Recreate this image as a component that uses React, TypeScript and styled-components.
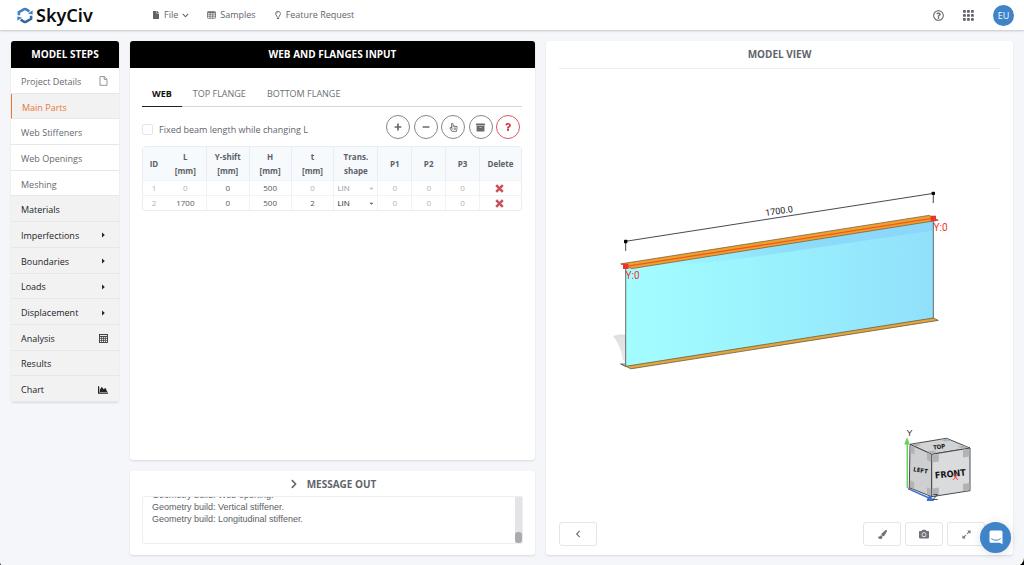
import React from "react";
import styled, { createGlobalStyle, css } from "styled-components";
import {
  FaArchive,
  FaCamera,
  FaChartArea,
  FaChevronDown,
  FaChevronLeft,
  FaChevronRight,
  FaFile,
  FaPaintBrush,
  FaQuestion,
  FaRegHandPointer,
  FaRegLightbulb,
  FaRegQuestionCircle,
} from "react-icons/fa";

const GlobalStyle = createGlobalStyle`
  * { box-sizing: border-box; }
  html { background: #000; }
  body { margin: 0; font-family: "Open Sans", "Noto Sans", sans-serif; font-size: 9px; color: #5f646b; }
  button, select, input { font: inherit; color: inherit; margin: 0; padding: 0; background: none; border: 0; }
  button { cursor: pointer; }
  a { color: inherit; text-decoration: none; }
`;

const Page = styled.div`
  min-height: 100vh;
  display: flex;
  flex-direction: column;
  background: #f5f6f9;
  border-radius: 0 0 8px 4px;
  overflow: hidden;
`;

const Header = styled.header`
  display: flex;
  align-items: center;
  height: 30px;
  padding: 0 10px 0 17px;
  background: #fff;
  box-shadow: 0 1px 2px rgba(0, 0, 0, 0.2);
`;

const Brand = styled.a`
  display: flex;
  align-items: center;
  gap: 3px;
  width: 135px;
  font: 600 18px/28px "Noto Sans", "Open Sans", sans-serif;
  color: #0c0c0e;
`;

const TopNav = styled.nav`
  display: flex;
  flex: 1;
  gap: 18px;
`;

const NavButton = styled.button`
  display: flex;
  align-items: center;
  gap: 4px;
  line-height: 14px;
`;

const HeaderTools = styled.div`
  display: flex;
  align-items: center;
  gap: 19px;
`;

const IconButton = styled.button`
  display: flex;
`;

const Avatar = styled.button`
  width: 21px;
  height: 21px;
  border-radius: 50%;
  background: #3f83c8;
  color: #fff;
`;

const Main = styled.main`
  flex: 1;
  display: grid;
  grid-template-columns: 108px minmax(0, 405fr) minmax(0, 467fr);
  gap: 11px;
  padding: 11px;
`;

const panel = css`
  background: #fff;
  border-radius: 3px;
  box-shadow: 0 1px 2px rgba(40, 50, 70, 0.14);
`;

const Sidebar = styled.nav`
  ${panel}
  align-self: start;
  overflow: hidden;
`;

const Title = styled.h2<{ $dark?: boolean }>`
  margin: 0;
  display: flex;
  align-items: center;
  justify-content: center;
  gap: 8px;
  height: 27px;
  padding-bottom: 2px;
  font-size: 10px;
  font-weight: 700;
  color: ${(p) => (p.$dark ? "#fff" : "#5f646b")};
  background: ${(p) => (p.$dark ? "#000" : "transparent")};
`;

const StepList = styled.ul`
  list-style: none;
  margin: 0;
  padding: 0;
  display: grid;
  grid-auto-rows: 1fr;
  height: 334px;
`;

const Step = styled.li<{ $group?: boolean; $active?: boolean }>`
  display: grid;
  border-bottom: 1px solid #e6e7e9;
  background: ${(p) => (p.$group || p.$active ? "#f2f2f3" : "#fff")};
  color: ${(p) => (p.$active ? "#e8773a" : p.$group ? "#222427" : "#666a70")};
  ${(p) => p.$active && "border-left: 1px solid #e8773a;"}
`;

const StepLink = styled.a`
  display: flex;
  align-items: center;
  justify-content: space-between;
  padding: 2px 10px 0;
`;

const StepIcon = styled.span`
  width: 12px;
  display: flex;
  justify-content: center;
`;

const Column = styled.div`
  display: flex;
  flex-direction: column;
  gap: 11px;
`;

const InputPanel = styled.section`
  ${panel}
  flex: 1;
  overflow: hidden;
`;

const PanelBody = styled.div`
  padding: 12px 13px 12px 12px;
`;

const Tabs = styled.div`
  display: flex;
  gap: 1px;
  height: 27px;
  border-bottom: 1px solid #d4d6d9;
`;

const Tab = styled.button<{ $active?: boolean }>`
  height: 27px;
  padding: 0 10px;
  font-weight: ${(p) => (p.$active ? 700 : 400)};
  color: ${(p) => (p.$active ? "#111" : "#6b6f75")};
  border-bottom: 1px solid ${(p) => (p.$active ? "#222" : "transparent")};
`;

const Toolbar = styled.div`
  display: flex;
  align-items: center;
  justify-content: space-between;
  padding: 8px 2px 7px 0;
`;

const CheckLabel = styled.label`
  display: flex;
  align-items: center;
  gap: 6px;
  padding-top: 4px;
`;

const CheckBox = styled.input`
  appearance: none;
  width: 11px;
  height: 11px;
  border: 1px solid #e3e5e9;
  border-radius: 2px;
`;

const RoundButtons = styled.div`
  display: flex;
  justify-content: space-between;
  width: 134px;
`;

const RoundButton = styled.button<{ $danger?: boolean }>`
  width: 24px;
  height: 24px;
  display: flex;
  align-items: center;
  justify-content: center;
  border: 1px solid ${(p) => (p.$danger ? "#d65a62" : "#86888c")};
  border-radius: 50%;
  color: ${(p) => (p.$danger ? "#cf3742" : "#66696e")};
`;

const Sheet = styled.table`
  width: 100%;
  table-layout: fixed;
  border-collapse: separate;
  border-spacing: 0;
  border: 1px solid #e9edf1;
  border-radius: 3px;
  text-align: center;
  font-size: 8px;
`;

const HeadCell = styled.th`
  height: 33px;
  padding: 0;
  line-height: 14px;
  font-weight: 700;
  color: #5b6067;
  background: #f7fafc;
  border-right: 1px solid #e9edf1;
  &:first-child, &:last-child { border-right: 0; }
`;

const Cell = styled.td<{ $muted?: boolean }>`
  height: 15px;
  padding: 0;
  line-height: 14px;
  color: ${(p) => (p.$muted ? "#b0b3b8" : "#54585e")};
  border-top: 1px solid #f0f3f5;
  border-right: 1px solid #f0f3f5;
  &:first-child, &:last-child { border-right: 0; }
`;

const ShapePick = styled.span<{ $muted?: boolean }>`
  display: flex;
  align-items: center;
  justify-content: space-between;
  padding: 0 3px;
  color: ${(p) => (p.$muted ? "#8f9297" : "#222")};
`;

const ShapeSelect = styled.select`
  appearance: none;
  flex: 1;
  min-width: 0;
  height: 14px;
  line-height: 14px;
  opacity: 1;
`;

const DeleteButton = styled.button`
  display: flex;
  justify-content: center;
  width: 100%;
  padding: 1px 3px 0 0;
`;

const MessagePanel = styled.section`
  ${panel}
  padding: 0 12px 11px;
`;

const MessageTitle = styled(Title)`
  height: 25px;
  padding-bottom: 0;
`;

const Log = styled.div`
  display: flex;
  height: 48px;
  border: 1px solid #eceef0;
  border-radius: 2px;
  overflow: hidden;
`;

const LogLines = styled.div`
  flex: 1;
  display: flex;
  flex-direction: column;
  justify-content: flex-end;
  padding: 0 9px 18px;
  font: 9px/12px "Liberation Sans", Arial, sans-serif;
  color: #5c6065;
`;

const ScrollTrack = styled.div`
  display: flex;
  align-items: flex-end;
  width: 7px;
  background: #e4e4e6;
`;

const ScrollThumb = styled.div`
  width: 7px;
  height: 11px;
  border-radius: 3px;
  background: #a9abad;
`;

const ViewPanel = styled.section`
  ${panel}
  display: flex;
  flex-direction: column;
  padding-bottom: 9px;
`;

const ViewTitle = styled(Title)`
  height: 28px;
  margin: 0 13px;
  border-bottom: 1px solid #eceef1;
`;

const Scene = styled.svg`
  flex: 1;
  display: block;
  width: 100%;
  min-height: 0;
`;

const ViewActions = styled.div`
  display: flex;
  gap: 4px;
  padding: 0 28px 0 13px;
`;

const ViewButton = styled.button<{ $first?: boolean }>`
  display: flex;
  align-items: center;
  justify-content: center;
  width: 38px;
  height: 24px;
  border: 1px solid #e3e5e8;
  border-radius: 3px;
  background: #fff;
  color: #707378;
  ${(p) => p.$first && "margin-right: auto;"}
`;

const ChatButton = styled.button`
  position: fixed;
  right: 13px;
  bottom: 12px;
  width: 31px;
  height: 31px;
  display: flex;
  align-items: center;
  justify-content: center;
  border-radius: 50%;
  background: #3f83c8;
  box-shadow: 0 1px 10px rgba(0, 0, 0, 0.12);
`;

const Logo = () => (
  <svg width="16" height="17" viewBox="0 0 16 17" aria-hidden="true" fill="none" strokeWidth="2.6">
    <path d="M1.9 8.2V5.2L7.2 2.2Q8 1.8 8.8 2.2L12.4 4.3" stroke="#3e80c4" />
    <path d="M11 6.6L15.6 7.4V3.2Z" fill="#3e80c4" />
    <path d="M14.1 8.8V11.8L8.8 14.8Q8 15.2 7.2 14.8L3.6 12.7" stroke="#34699f" />
    <path d="M5 10.4L0.4 9.6V13.8Z" fill="#3e80c4" />
  </svg>
);

const TableIcon = () => (
  <svg width="9" height="8" viewBox="0 0 9 8" fill="none" stroke="#666a70" strokeWidth="0.8" aria-hidden="true">
    <rect x="0.5" y="0.7" width="8" height="6.6" rx="0.7" />
    <path d="M0.5 1.3H8.5" strokeWidth="1.2" />
    <path d="M0.5 3.2H8.5M0.5 5.2H8.5M3.1 1V7.3M5.8 1V7.3" />
  </svg>
);

const AppsIcon = () => (
  <svg width="11" height="11" viewBox="0 0 11 11" fill="#5f646b" aria-hidden="true">
    {[0, 4, 8].map((y) => [0, 4, 8].map((x) => <rect key={`${x}-${y}`} x={x} y={y} width="2.8" height="2.8" rx="0.4" />))}
  </svg>
);

const PageIcon = () => (
  <svg width="9" height="10" viewBox="0 0 9 10" fill="none" stroke="#777b80" strokeWidth="0.8" aria-hidden="true">
    <path d="M1 0.6H5.4L8 3.2V9.3H1ZM5.2 0.8V3.4H7.8" />
  </svg>
);

const CalculatorIcon = () => (
  <svg width="9" height="9" viewBox="0 0 9 9" aria-hidden="true">
    <rect x="0.5" y="0.5" width="8" height="8" fill="#fff" stroke="#333" strokeWidth="0.9" />
    <path d="M1 2.4H8" stroke="#333" strokeWidth="1" />
    <path d="M1 4.4H8M1 6.4H8M2.6 3V8.4M4.5 3V8.4M6.4 3V8.4" stroke="#444" strokeWidth="0.8" />
  </svg>
);

const PlusMinus = ({ plus }: { plus?: boolean }) => (
  <svg width="8" height="8" viewBox="0 0 8 8" stroke="currentColor" strokeWidth="1.7" aria-hidden="true">
    <path d={plus ? "M0.6 4H7.4M4 0.6V7.4" : "M0.6 4H7.4"} />
  </svg>
);

const Caret = ({ down }: { down?: boolean }) => (
  <svg width="5" height="6" viewBox="0 0 5 6" fill="currentColor" aria-hidden="true">
    {down ? <path d="M0.4 2.8H4.6L2.5 4.8Z" opacity="0.7" /> : <path d="M1 0.6V5.4L3.8 3Z" />}
  </svg>
);

const Cross = () => (
  <svg width="9" height="9" viewBox="0 0 9 9" stroke="#cb5158" strokeWidth="2.5" aria-hidden="true">
    <path d="M1.2 1.2L7.8 7.8M7.8 1.2L1.2 7.8" />
  </svg>
);

const ExpandIcon = () => (
  <svg width="9" height="9" viewBox="0 0 9 9" fill="currentColor" aria-hidden="true">
    <path d="M5.2 0.4H8.6V3.8ZM0.4 5.2V8.6H3.8Z" />
    <path d="M1.6 7.4L3.9 5.1M5.1 3.9L7.4 1.6" stroke="currentColor" strokeWidth="1.1" />
  </svg>
);

type StepItem = { label: string; group?: boolean; active?: boolean; icon?: React.ReactNode };

const steps: StepItem[] = [
  { label: "Project Details", icon: <PageIcon /> },
  { label: "Main Parts", active: true },
  { label: "Web Stiffeners" },
  { label: "Web Openings" },
  { label: "Meshing" },
  { label: "Materials", group: true },
  { label: "Imperfections", group: true, icon: <Caret /> },
  { label: "Boundaries", group: true, icon: <Caret /> },
  { label: "Loads", group: true, icon: <Caret /> },
  { label: "Displacement", group: true, icon: <Caret /> },
  { label: "Analysis", group: true, icon: <CalculatorIcon /> },
  { label: "Results", group: true },
  { label: "Chart", group: true, icon: <FaChartArea size={10} /> },
];

const columns: { lines: string[]; width: number }[] = [
  { lines: ["ID"], width: 22 },
  { lines: ["L", "[mm]"], width: 42 },
  { lines: ["Y-shift", "[mm]"], width: 43 },
  { lines: ["H", "[mm]"], width: 42 },
  { lines: ["t", "[mm]"], width: 43 },
  { lines: ["Trans.", "shape"], width: 44 },
  { lines: ["P1"], width: 34 },
  { lines: ["P2"], width: 34 },
  { lines: ["P3"], width: 34 },
  { lines: ["Delete"], width: 41 },
];
const totalWidth = columns.reduce((sum, c) => sum + c.width, 0);

const rows = [
  { id: 1, L: 0, y: 0, H: 500, t: 0, first: true },
  { id: 2, L: 1700, y: 0, H: 500, t: 2, first: false },
];

const BeamScene = () => (
  <Scene viewBox="546 69 467 453" role="img" aria-label="Beam model">
    <defs>
      <linearGradient id="web" x1="0" y1="0" x2="1" y2="0">
        <stop offset="0" stopColor="#a3fdff" />
        <stop offset="0.4" stopColor="#9bf4fe" />
        <stop offset="1" stopColor="#91e0fb" />
      </linearGradient>
      <linearGradient id="shade" x1="0" y1="0" x2="1" y2="0">
        <stop offset="0" stopColor="#93e6fa" stopOpacity="0" />
        <stop offset="0.5" stopColor="#8cdcf9" />
        <stop offset="1" stopColor="#8bd5fa" />
      </linearGradient>
      <linearGradient id="ground" x1="0" y1="0" x2="0" y2="1">
        <stop offset="0" stopColor="#dfdfe0" />
        <stop offset="1" stopColor="#e9e9ea" />
      </linearGradient>
    </defs>

    <path d="M613 336L619 334.5H626V364L623 360Q621 346 613 336Z" fill="url(#ground)" />
    <path d="M625.7 267L933.3 219V318.5L625.7 366.5Z" fill="url(#web)" />
    <path d="M660 263L933.3 221V230.5L760 256Q700 264 660 266Z" fill="url(#shade)" />
    <path d="M625.7 267V366.5M933.3 219V318.5" stroke="#5d6b70" strokeWidth="1" />

    <path d="M620.7 364L625.7 366.3L933.3 318L938.3 320.4L631 368.8Z" fill="#e2a63f" stroke="#6b5a3a" strokeWidth="0.8" />
    <path d="M620.7 364H625.7" stroke="#5b5040" strokeWidth="0.8" />
    <path d="M620.7 263.9L929 215.4L938.3 220.2L631.7 268.6Z" fill="#f0a02f" stroke="#7a6038" strokeWidth="0.8" />
    <path d="M626 266.4L933.3 218.2" stroke="#ee5a1e" strokeWidth="1.3" />

    <g stroke="#33363f" strokeWidth="0.9">
      <path d="M625.7 241.3L933.3 193.4M625.7 241.3V251M933.3 193.4V203" />
    </g>
    <rect x="624" y="239.8" width="3.4" height="3.4" rx="0.8" />
    <rect x="931.6" y="191.7" width="3.4" height="3.4" rx="0.8" />
    <text x="779.5" y="214" textAnchor="middle" transform="rotate(-8.8 779.5 214)" fontFamily="Roboto, sans-serif" fontSize="9" fill="#16171b">
      1700.0
    </text>

    <g fill="#ef3326" fontFamily="Roboto, sans-serif" fontSize="10">
      <rect x="623" y="263.6" width="5.4" height="5.4" />
      <rect x="930.6" y="215.7" width="5.4" height="5.4" />
      <text x="625.5" y="278.6">Y:0</text>
      <text x="933.5" y="230.5">Y:0</text>
    </g>

    <g stroke="#3a3a3c" strokeWidth="0.9" strokeLinejoin="round">
      <path d="M910 444.3L946.5 438.3L970 448L931.7 454.3Z" fill="#d2d3d4" />
      <path d="M910 444.3L931.7 454.3V496.7L909.3 487.7Z" fill="#cecfd0" />
      <path d="M931.7 454.3L970 448V490.7L931.7 496.7Z" fill="#dadbdc" />
    </g>
    <g fill="#b2b3b5">
      <path d="M932.3 455L938.8 454V461.5L932.3 462.5ZM963 449.8L969.4 448.8V456.4L963 457.4ZM932.3 488.6L938.8 487.6V495L932.3 496ZM963 484L969.4 483V490L963 491Z" />
      <path d="M910.5 445.3L914.5 447V454.4L910.5 452.6ZM927 452.6L931.2 454.6V462L927 460ZM910 480.3L914.2 482V489L910 487.3ZM927 487.2L931.2 489V495.6L927 494Z" />
      <path d="M911.5 444.4L917.5 443.4L921.5 445.2L915.5 446.3ZM940.5 439.7L946.5 438.8L951 440.6L945 441.6ZM927 451.6L933 450.6L937.6 452.7L931.7 453.7ZM957.5 446.6L963.5 445.6L968.6 447.8L962.5 448.7Z" />
    </g>
    <g fontFamily="Liberation Sans Narrow, DejaVu Sans Condensed, sans-serif" fontWeight="700" fill="#151515" textAnchor="middle">
      <text x="950.5" y="477" fontSize="9" transform="rotate(-6 950.5 476)">FRONT</text>
      <text x="920.3" y="472.5" fontSize="6" transform="rotate(10 920.3 472)">LEFT</text>
      <text x="939.5" y="449" fontSize="6" transform="rotate(-8 939.5 449)">TOP</text>
    </g>
    <path d="M907.3 488V443" stroke="#67cf5e" strokeWidth="1.5" />
    <path d="M904.3 444.5L907 437L909.8 444.5Z" fill="#67cf5e" />
    <path d="M908 488.6L929 498" stroke="#3a6fd6" strokeWidth="1.5" />
    <path d="M929.6 495.4L933.4 500.6L927 500.4Z" fill="#3a6fd6" stroke="#3a6fd6" />
    <circle cx="909.5" cy="488" r="1" fill="#e2362f" />
    <g fontFamily="Liberation Sans, sans-serif" fontSize="9">
      <text x="906.5" y="436.3" fill="#333">Y</text>
      <text x="932.5" y="499.5" fill="#27324a">Z</text>
      <text x="952.5" y="480" fill="#ee3a30">X</text>
    </g>
  </Scene>
);

export default function App() {
  return (
    <>
      <GlobalStyle />
      <Page>
        <Header>
          <Brand href="#">
            <Logo />
            SkyCiv
          </Brand>
          <TopNav>
            <NavButton>
              <FaFile size={8} /> File <FaChevronDown size={7} />
            </NavButton>
            <NavButton>
              <TableIcon /> Samples
            </NavButton>
            <NavButton>
              <FaRegLightbulb size={8} /> Feature Request
            </NavButton>
          </TopNav>
          <HeaderTools>
            <IconButton aria-label="Help"><FaRegQuestionCircle size={11} /></IconButton>
            <IconButton aria-label="Apps"><AppsIcon /></IconButton>
            <Avatar>EU</Avatar>
          </HeaderTools>
        </Header>

        <Main>
          <Sidebar>
            <Title $dark>MODEL STEPS</Title>
            <StepList>
              {steps.map((s) => (
                <Step key={s.label} $group={s.group} $active={s.active}>
                  <StepLink href="#">
                    {s.label}
                    {s.icon && <StepIcon>{s.icon}</StepIcon>}
                  </StepLink>
                </Step>
              ))}
            </StepList>
          </Sidebar>

          <Column>
            <InputPanel>
              <Title $dark>WEB AND FLANGES INPUT</Title>
              <PanelBody>
                <Tabs role="tablist">
                  <Tab role="tab" aria-selected $active>WEB</Tab>
                  <Tab role="tab">TOP FLANGE</Tab>
                  <Tab role="tab">BOTTOM FLANGE</Tab>
                </Tabs>
                <Toolbar>
                  <CheckLabel>
                    <CheckBox type="checkbox" />
                    Fixed beam length while changing L
                  </CheckLabel>
                  <RoundButtons>
                    <RoundButton aria-label="Add row"><PlusMinus plus /></RoundButton>
                    <RoundButton aria-label="Remove row"><PlusMinus /></RoundButton>
                    <RoundButton aria-label="Pick"><FaRegHandPointer size={9} /></RoundButton>
                    <RoundButton aria-label="Library"><FaArchive size={9} /></RoundButton>
                    <RoundButton aria-label="Help" $danger><FaQuestion size={8} /></RoundButton>
                  </RoundButtons>
                </Toolbar>
                <Sheet>
                  <colgroup>
                    {columns.map((c) => (
                      <col key={c.lines[0]} style={{ width: `${(c.width / totalWidth) * 100}%` }} />
                    ))}
                  </colgroup>
                  <thead>
                    <tr>
                      {columns.map((c) => (
                        <HeadCell key={c.lines[0]}>
                          {c.lines[0]}
                          {c.lines[1] && <><br />{c.lines[1]}</>}
                        </HeadCell>
                      ))}
                    </tr>
                  </thead>
                  <tbody>
                    {rows.map((r) => (
                      <tr key={r.id}>
                        <Cell $muted>{r.id}</Cell>
                        <Cell $muted={r.first}>{r.L}</Cell>
                        <Cell>{r.y}</Cell>
                        <Cell>{r.H}</Cell>
                        <Cell $muted={r.first}>{r.t}</Cell>
                        <Cell>
                          <ShapePick $muted={r.first}>
                            <ShapeSelect aria-label={`Transition shape ${r.id}`} disabled={r.first}>
                              <option>LIN</option>
                            </ShapeSelect>
                            <Caret down />
                          </ShapePick>
                        </Cell>
                        <Cell $muted>0</Cell>
                        <Cell $muted>0</Cell>
                        <Cell $muted>0</Cell>
                        <Cell>
                          <DeleteButton aria-label={`Delete row ${r.id}`}><Cross /></DeleteButton>
                        </Cell>
                      </tr>
                    ))}
                  </tbody>
                </Sheet>
              </PanelBody>
            </InputPanel>

            <MessagePanel>
              <MessageTitle>
                <FaChevronRight size={10} /> MESSAGE OUT
              </MessageTitle>
              <Log>
                <LogLines>
                  <div>Geometry build: Web opening.</div>
                  <div>Geometry build: Vertical stiffener.</div>
                  <div>Geometry build: Longitudinal stiffener.</div>
                </LogLines>
                <ScrollTrack><ScrollThumb /></ScrollTrack>
              </Log>
            </MessagePanel>
          </Column>

          <ViewPanel>
            <ViewTitle>MODEL VIEW</ViewTitle>
            <BeamScene />
            <ViewActions>
              <ViewButton $first aria-label="Collapse"><FaChevronLeft size={8} /></ViewButton>
              <ViewButton aria-label="Style"><FaPaintBrush size={9} /></ViewButton>
              <ViewButton aria-label="Screenshot"><FaCamera size={10} /></ViewButton>
              <ViewButton aria-label="Full screen"><ExpandIcon /></ViewButton>
            </ViewActions>
          </ViewPanel>
        </Main>
        <ChatButton aria-label="Chat">
          <svg width="14" height="15" viewBox="0 0 14 15" aria-hidden="true">
            <path d="M2 0.5H12Q13.5 0.5 13.5 2V14.2L10.8 12.8H2Q0.5 12.8 0.5 11.3V2Q0.5 0.5 2 0.5Z" fill="#fff" />
            <path d="M2.6 8.8Q7 12 11.4 8.8" fill="none" stroke="#3f83c8" strokeWidth="1" strokeLinecap="round" />
          </svg>
        </ChatButton>
      </Page>
    </>
  );
}
